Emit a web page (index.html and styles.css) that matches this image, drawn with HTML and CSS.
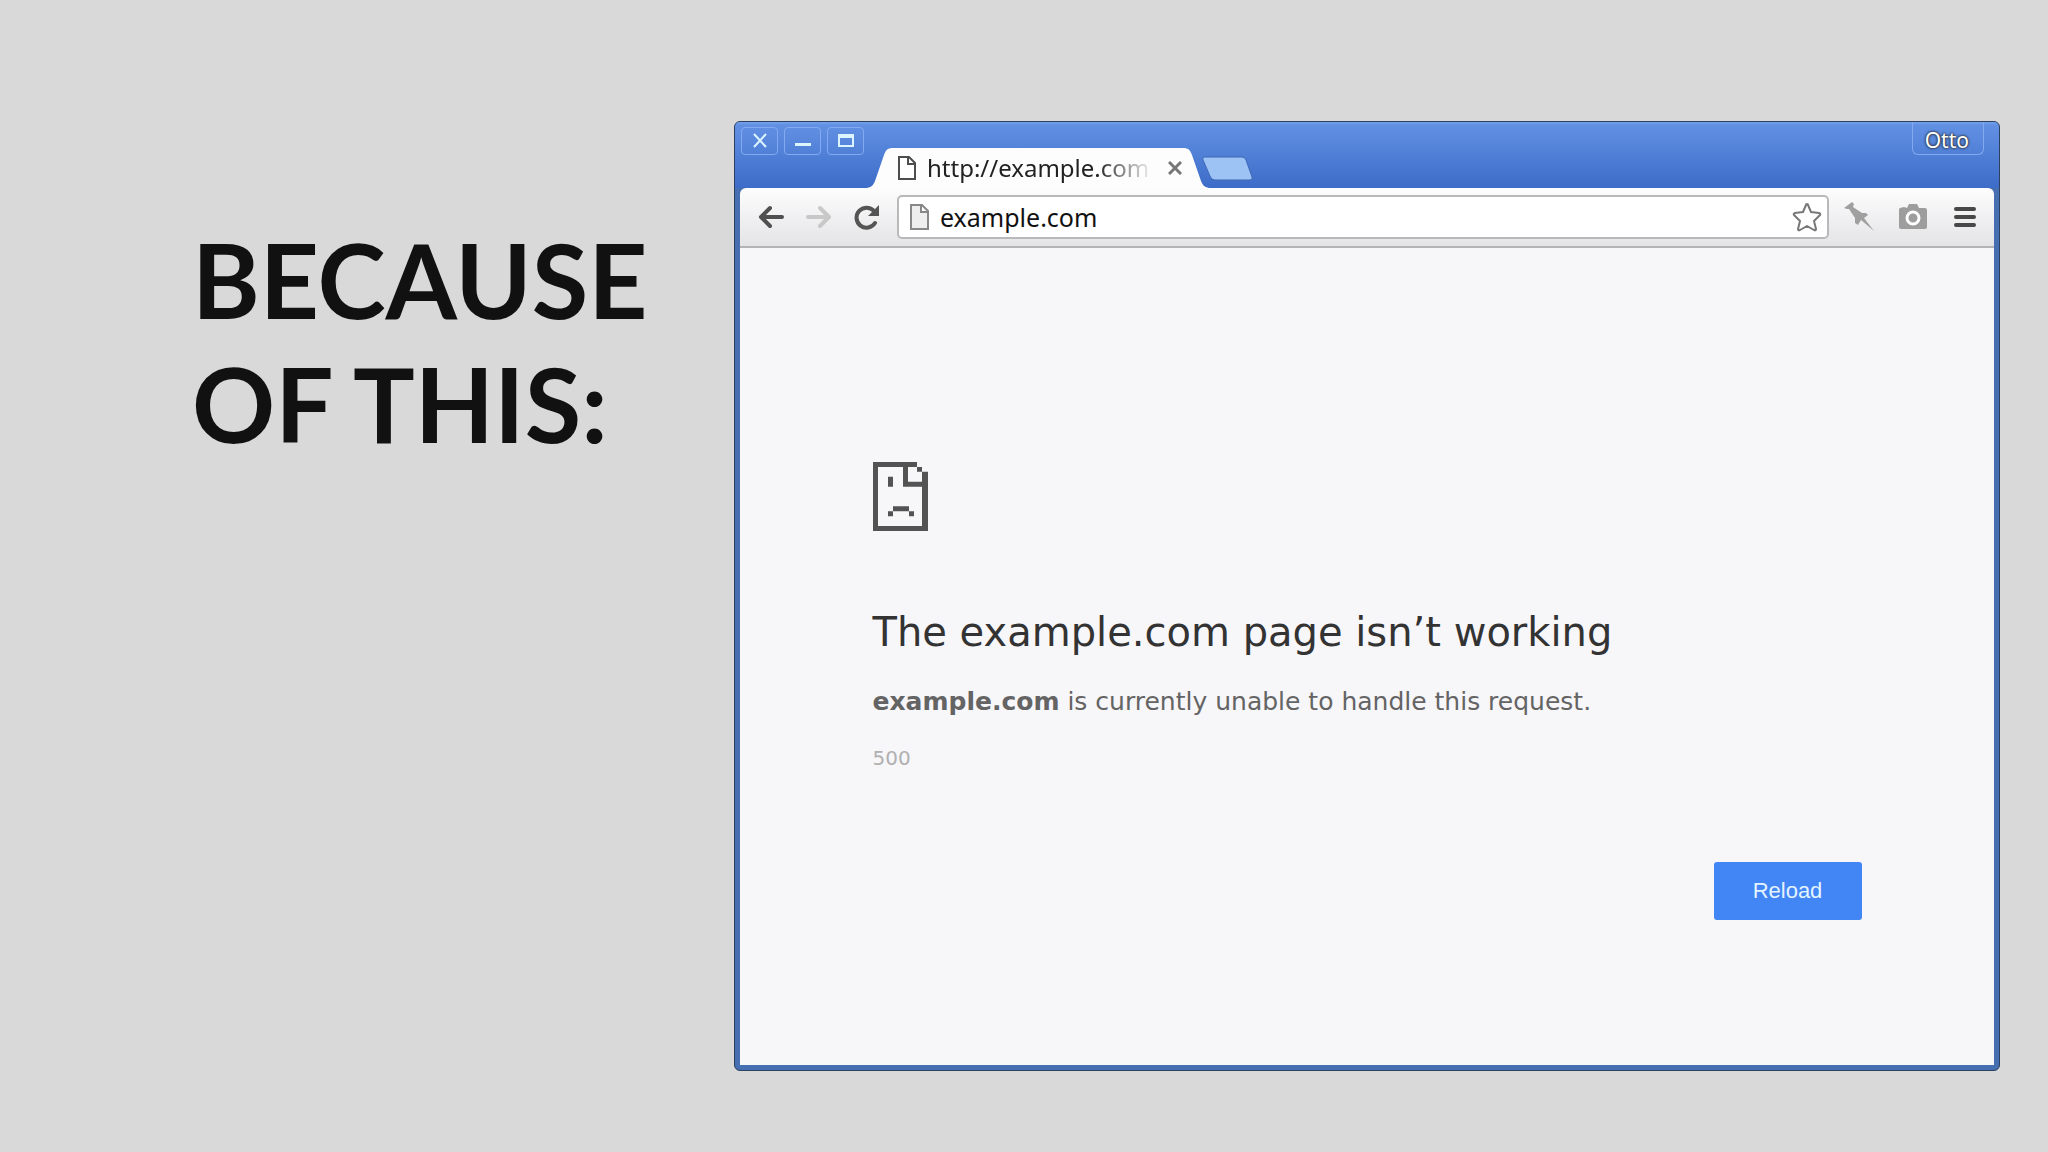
FILE: index.html
```html
<!DOCTYPE html>
<html lang="en">
<head>
  <meta charset="UTF-8" />
  <meta name="viewport" content="width=device-width, initial-scale=1.0"/>
  <title>Because of this</title>
  <link rel="stylesheet" href="styles.css">
</head>
<body>
  <main class="slide">
    <h1 class="slide-title">BECAUSE<br>OF THIS:</h1>

    <section class="browser">
      <!-- Title bar -->
      <header class="titlebar">
        <div class="window-buttons">
          <button class="window-btn" aria-label="Close">
            <svg width="16" height="16" viewBox="0 0 16 16"><path d="M2 1l12 13M14 1L2 14"/></svg>
          </button>
          <button class="window-btn" aria-label="Minimize">
            <svg width="16" height="16" viewBox="0 0 16 16"><path d="M0 11.5h16" stroke-width="3"/></svg>
          </button>
          <button class="window-btn" aria-label="Maximize">
            <svg width="16" height="16" viewBox="0 0 16 16"><path d="M1 2h14v11H1zM1 4h14"/></svg>
          </button>
        </div>

        <div class="tabs">
          <div class="tab">
            <svg class="tab-edge" width="24" height="40" viewBox="0 0 24 40"><path d="M0 40C4 39 6 38 8 33L17 7C19 2 20 1 24 0V40Z"/></svg>
            <div class="tab-body">
              <svg width="18" height="24" viewBox="0 0 18 24"><path d="M1 1h10l6 6v16H1zM10 1v7h7" fill="#fff" stroke="#4d4d4d" stroke-width="2"/></svg>
              <span class="tab-title">http://example.com</span>
              <button class="tab-close" aria-label="Close tab">
                <svg width="14" height="14" viewBox="0 0 14 14"><path d="M1 1l12 12M13 1L1 13" stroke="#777" stroke-width="3"/></svg>
              </button>
            </div>
            <svg class="tab-edge" width="24" height="40" viewBox="0 0 24 40"><path d="M0 0C4 1 5 2 7 7L16 33C18 38 20 39 24 40H0Z"/></svg>
          </div>
          <button class="new-tab" aria-label="New tab">
            <svg width="52" height="26" viewBox="0 0 52 26"><path d="M3 1h38q3 0 4 3l6 17q1 3-2 3H14q-4 0-5-4L2 4Q1 1 3 1z" fill="#9cc3f4" stroke="#3f69b5" stroke-width="1"/></svg>
          </button>
        </div>

        <button class="profile">Otto</button>
      </header>

      <!-- Toolbar -->
      <nav class="toolbar">
        <button class="tool" aria-label="Back">
          <svg width="26" height="24" viewBox="0 0 26 24"><path d="M12 3L3 12l9 9M3 12h21" fill="none" stroke="#505050" stroke-width="4" stroke-linecap="round" stroke-linejoin="round"/></svg>
        </button>
        <button class="tool" aria-label="Forward">
          <svg width="26" height="24" viewBox="0 0 26 24"><path d="M14 3l9 9-9 9M23 12H2" fill="none" stroke="#c8c8c8" stroke-width="4" stroke-linecap="round" stroke-linejoin="round"/></svg>
        </button>
        <button class="tool" aria-label="Reload page">
          <svg width="26" height="26" viewBox="0 0 26 26"><path d="M21 19A10 10 0 1 1 20 7" fill="none" stroke="#555" stroke-width="4" stroke-linecap="round"/><path d="M25 1v11H14z" fill="#555"/></svg>
        </button>
        <div class="omnibox">
          <svg width="19" height="26" viewBox="0 0 19 26"><path d="M1 1h11l6 6v18H1zM11 1v7h7" fill="#eee" stroke="#888" stroke-width="2"/></svg>
          <input class="address" type="text" value="example.com" aria-label="Address">
          <button class="tool" aria-label="Bookmark this page">
            <svg width="30" height="30" viewBox="0 0 30 30"><path d="M15 2q1 0 1 1l3 7 8 1q2 1 1 2l-6 6 2 8q0 2-2 1l-7-4-7 4q-2 1-2-1l2-8-6-6q-1-1 1-2l8-1 3-7q0-1 1-1z" fill="#fff" stroke="#777" stroke-width="2" stroke-linejoin="round"/></svg>
          </button>
        </div>
        <div class="extensions">
          <button class="tool" aria-label="Pin">
            <svg width="32" height="30" viewBox="0 0 32 30"><path d="M1 6L9 0l2 2-1 3 9 6h4l2 2-4 3 10 13-13-11-3 5-3-2v-5L6 7H4z" fill="#a0a0a0"/></svg>
          </button>
          <button class="tool" aria-label="Camera">
            <svg width="28" height="26" viewBox="0 0 28 26"><path d="M1 4l4-1 3 1 2-4h8l2 4h6q2 0 2 2v17q0 2-2 2H2q-2 0-2-2V5z" fill="#9d9d9d"/><circle cx="14" cy="14" r="6" fill="#9d9d9d" stroke="#fff" stroke-width="3"/></svg>
          </button>
          <button class="tool" aria-label="Menu">
            <svg width="22" height="22" viewBox="0 0 22 22"><path d="M2 3h18M2 11h18M2 19h18" stroke="#484848" stroke-width="4" stroke-linecap="round"/></svg>
          </button>
        </div>
      </nav>

      <!-- Error page -->
      <div class="page">
        <div class="error">
          <svg class="sad-page" width="55" height="69" viewBox="0 0 55 70" preserveAspectRatio="none" fill="#535353">
            <path d="M0 0H44V5H35V20H49V10H55V70H0ZM5 5V65H49V25H30V5Z" fill-rule="evenodd"/>
            <path d="M44 5h5v5h-5zM15 15h5v10h-5zM20 45h16v5H20zM15 50h5v5h-5zM36 50h5v5h-5z"/>
          </svg>
          <h2>The example.com page isn’t working</h2>
          <p class="reason"><strong>example.com</strong> is currently unable to handle this request.</p>
          <p class="code">500</p>
          <button class="reload">Reload</button>
        </div>
      </div>
    </section>
  </main>
</body>
</html>
```
FILE: styles.css
```css
* {
  box-sizing: border-box;
  margin: 0;
  padding: 0;
}

body {
  font-family: "Noto Sans", sans-serif;
  background: #d9d9d9;
}

button {
  border: none;
  background: none;
  cursor: pointer;
}

svg {
  display: block;
  flex-shrink: 0;
}

.slide {
  display: flex;
  min-height: 100vh;
  padding: 121px 48px 81px 192px;
}

.slide-title {
  flex: 0 0 542px;
  padding-top: 96px;
  font-family: Lato, sans-serif;
  font-size: 103px;
  line-height: 124px;
  font-weight: 700;
  color: #111;
}

/* Browser window */
.browser {
  flex: 1;
  display: flex;
  flex-direction: column;
  padding: 0 5px 5px;
  background: #456fb0;
  border: 1px solid #2c405f;
  border-radius: 6px;
  overflow: hidden;
}

.titlebar {
  display: flex;
  align-items: flex-start;
  height: 66px;
  margin: 0 -5px;
  padding: 0 15px 0 6px;
  background: linear-gradient(#76a2ec 0, #6190e3 3px, #3d6cc9 100%);
}

.window-buttons {
  display: flex;
  gap: 6px;
  padding-top: 5px;
}

.window-btn {
  display: flex;
  align-items: center;
  justify-content: center;
  width: 37px;
  height: 28px;
  border: 1px solid #83aaf0;
  border-radius: 4px;
}

.window-btn svg {
  fill: none;
  stroke: #dcf4ff;
  stroke-width: 2;
}

.tabs {
  display: flex;
  align-self: flex-end;
  flex: 1;
}

.tab {
  display: flex;
  margin-left: 3px;
}

.tab-edge {
  fill: #fdfdfe;
}

.tab-body {
  display: flex;
  align-items: center;
  width: 294px;
  padding: 0 3px 0 7px;
  background: #fdfdfe;
}

.tab-title {
  flex: 1;
  margin: 0 14px 0 11px;
  overflow: hidden;
  white-space: nowrap;
  font-size: 24px;
  line-height: 40px;
  color: #222;
  -webkit-mask-image: linear-gradient(to right, #000 75%, transparent);
  mask-image: linear-gradient(to right, #000 75%, transparent);
}

.new-tab {
  align-self: flex-start;
  margin-top: 8px;
  margin-left: -8px;
}

.profile {
  height: 33px;
  padding: 3px 14px 0 12px;
  border: 1px solid #83aaf0;
  border-top: none;
  border-radius: 0 0 6px 6px;
  font-family: "Noto Sans", sans-serif;
  font-size: 21px;
  line-height: 28px;
  color: #fff;
  text-shadow: 0 0 3px #222, 0 0 2px #222;
}

.toolbar {
  display: flex;
  align-items: center;
  height: 60px;
  padding: 0 18px;
  gap: 22px;
  background: linear-gradient(#fdfdfe, #e4e3e5);
  border-bottom: 2px solid #b4b4b6;
  border-radius: 6px 6px 0 0;
}

.omnibox {
  flex: 1;
  display: flex;
  align-items: center;
  height: 44px;
  margin-left: -5px;
  padding: 0 5px 0 11px;
  background: #fff;
  border: 2px solid #b9b9bb;
  border-radius: 5px;
}

.address {
  flex: 1;
  margin-left: 11px;
  border: none;
  outline: none;
  background: none;
  font-family: "Noto Sans", sans-serif;
  font-size: 25px;
  color: #111;
}

.extensions {
  display: flex;
  align-items: center;
  gap: 24px;
  margin-left: -8px;
}

.extensions .tool:last-child {
  margin-left: 3px;
}

/* Error page */
.page {
  flex: 1;
  padding: 214px 40px 40px;
  background: #f7f6f9;
}

.error {
  display: flex;
  flex-direction: column;
  align-items: flex-start;
  max-width: 989px;
  margin: 0 auto;
  font-family: "DejaVu Sans", sans-serif;
}

.error h2 {
  margin-top: 76px;
  font-size: 40px;
  line-height: 50px;
  font-weight: normal;
  color: #333;
}

.reason {
  margin-top: 28px;
  font-size: 25px;
  line-height: 34px;
  color: #646464;
}

.code {
  margin-top: 25px;
  font-size: 20px;
  line-height: 28px;
  color: #b0b0b0;
}

.reload {
  align-self: flex-end;
  width: 148px;
  height: 58px;
  margin-top: 90px;
  background: #4285f4;
  border-radius: 3px;
  font-family: "Liberation Sans", sans-serif;
  font-size: 22px;
  color: #e3f3ff;
}
```
